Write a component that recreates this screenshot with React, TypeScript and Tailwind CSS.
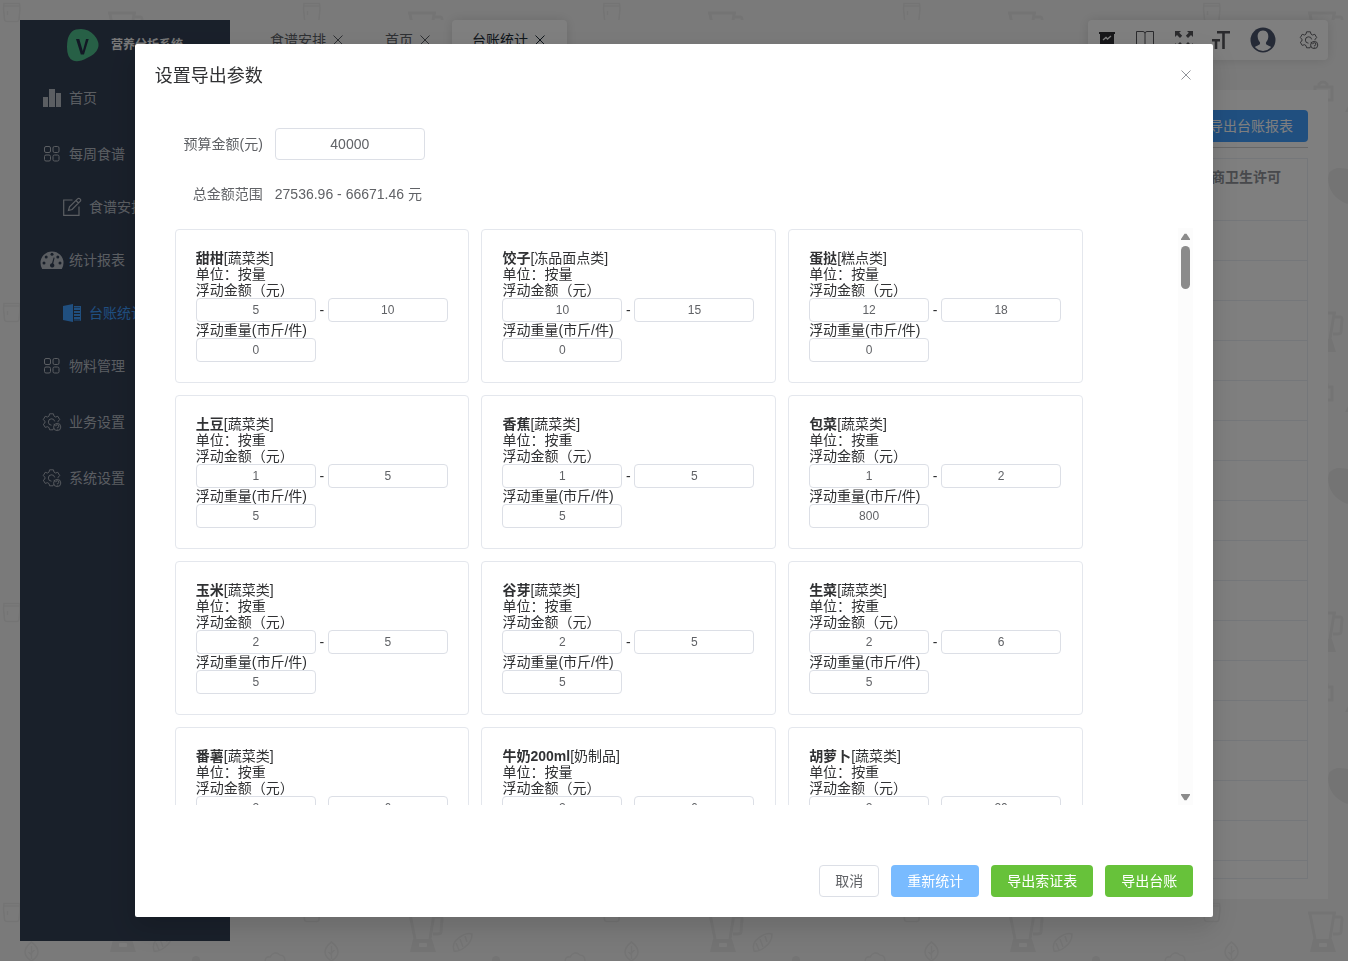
import React from "react";

type Food = {
  name: string;
  category: string;
  unit: string;
  min: string;
  max: string;
  weight: string;
};

const foods: Food[] = [
  { name: "甜柑", category: "蔬菜类", unit: "按量", min: "5", max: "10", weight: "0" },
  { name: "饺子", category: "冻品面点类", unit: "按量", min: "10", max: "15", weight: "0" },
  { name: "蛋挞", category: "糕点类", unit: "按量", min: "12", max: "18", weight: "0" },
  { name: "土豆", category: "蔬菜类", unit: "按重", min: "1", max: "5", weight: "5" },
  { name: "香蕉", category: "蔬菜类", unit: "按重", min: "1", max: "5", weight: "5" },
  { name: "包菜", category: "蔬菜类", unit: "按重", min: "1", max: "2", weight: "800" },
  { name: "玉米", category: "蔬菜类", unit: "按重", min: "2", max: "5", weight: "5" },
  { name: "谷芽", category: "蔬菜类", unit: "按重", min: "2", max: "5", weight: "5" },
  { name: "生菜", category: "蔬菜类", unit: "按重", min: "2", max: "6", weight: "5" },
  { name: "番薯", category: "蔬菜类", unit: "按重", min: "2", max: "6", weight: "5" },
  { name: "牛奶200ml", category: "奶制品", unit: "按量", min: "2", max: "6", weight: "0" },
  { name: "胡萝卜", category: "蔬菜类", unit: "按重", min: "2", max: "20", weight: "5" },
];

const BarsIcon = () => (
  <svg width="20" height="20" viewBox="0 0 20 20" fill="currentColor">
    <path d="M1 9h5v10H1zM7 1h6v18H7zM14 5h5v14h-5z" />
  </svg>
);

const GridIcon = () => (
  <svg width="20" height="20" viewBox="0 0 20 20" fill="none" stroke="currentColor">
    <rect x="2.500" y="2.500" width="6" height="6" rx="1.500" />
    <rect x="11" y="2.500" width="6" height="6" rx="1.500" />
    <rect x="2.500" y="11" width="6" height="6" rx="1.500" />
    <rect x="11" y="11" width="6" height="6" rx="1.500" />
  </svg>
);

const EditIcon = () => (
  <svg width="20" height="20" viewBox="0 0 20 20" fill="none" stroke="currentColor" strokeWidth="1.200">
    <path d="M10.500 3H1.700v15.300h15.300V9.500" />
    <path d="M6.500 13.500l1-3.600 8.300-8.200a1.300 1.300 0 0 1 1.900 0l.6.600a1.300 1.300 0 0 1 0 1.900l-8.200 8.300zM14 3.500l2.500 2.500" />
  </svg>
);

const GaugeIcon = () => (
  <svg className="-mx-0.5" width="24" height="20" viewBox="0 0 24 20">
    <path d="M2.200 19A11.300 11.300 0 0 1 .5 13a11.500 11.500 0 0 1 23 0 11.300 11.300 0 0 1-1.700 6z" fill="currentColor" />
    <g fill="#334055">
      <circle cx="4" cy="13" r="1.500" />
      <circle cx="6.200" cy="7" r="1.500" />
      <circle cx="12" cy="4.300" r="1.500" />
      <circle cx="17.800" cy="7" r="1.500" />
      <circle cx="20" cy="13" r="1.500" />
      <path d="M13.600 7.500l1 .3-1.300 5.700a2.200 2.200 0 1 1-1.300-.3z" />
    </g>
  </svg>
);

const LedgerIcon = () => (
  <svg width="20" height="20" viewBox="0 0 20 20" fill="currentColor">
    <path d="M1 3l10-2v18L1 17z" />
    <path d="M12 3h7v1.500h-7zM12 5h7v2h-7zM12 8h7v2h-7zM12 11h7v2h-7zM12 14h7v2h-7zM12 16.500h7v1h-7z" />
    <path d="M18 3h1v14.500h-1z" />
  </svg>
);

const GearIcon = () => (
  <svg width="20" height="20" viewBox="0 0 20 20" fill="none" stroke="currentColor" strokeWidth="0.900">
    <path d="M11.500 16.300l-.5 1.500H7.600l-.6-2.200-1.500-.9-2.300.7-1.900-3.200L2.900 11V9.200L1.300 7.600l1.900-3.300 2.300.7L7 4.100l.6-2.300h3.800l.6 2.300 1.500.9 2.300-.7 1.900 3.300-1.600 1.600v1" strokeLinejoin="round" />
    <path d="M9.500 13.200a3.200 3.200 0 1 1 3.200-3.800" />
    <circle cx="15.200" cy="15" r="3.600" />
    <path d="M13.800 14.200a1.500 1.500 0 1 1 1.500 1.500v.6M15.300 17v.7M11.700 12.300l1.600 1.200" />
  </svg>
);

const CloseIcon = () => (
  <svg width="10" height="10" viewBox="0 0 10 10" fill="none" stroke="currentColor">
    <path d="M.5.5l9 9M9.500.5l-9 9" />
  </svg>
);

const menu = [
  { label: "首页", icon: <BarsIcon /> },
  { label: "每周食谱", icon: <GridIcon /> },
  { label: "食谱安排", icon: <EditIcon />, child: true },
  { label: "统计报表", icon: <GaugeIcon /> },
  { label: "台账统计", icon: <LedgerIcon />, child: true, active: true },
  { label: "物料管理", icon: <GridIcon /> },
  { label: "业务设置", icon: <GearIcon /> },
  { label: "系统设置", icon: <GearIcon /> },
];

const tabs = [
  { label: "食谱安排" },
  { label: "首页" },
  { label: "台账统计", active: true },
];

// Repeating kitchen doodles behind the whole app
const Wallpaper = () => (
  <svg className="absolute inset-0 w-full h-full" aria-hidden="true">
    <defs>
      <pattern id="kitchen" width="300" height="300" patternUnits="userSpaceOnUse">
        <g fill="none" stroke="#e9e9e9" strokeWidth="1.600">
          <path d="M4 3.500h15.500l.5 5-1 11q-.3 2-2.500 2H7q-2.200 0-2.500-2l-1-11zM4 6h16M7.500 11v4" />
          <path d="M108 13h28M110 14l5 25M134 14l-4 25M134 17h6q2.500 0 2 3l-1 12q-.3 2-3 2h-5" strokeWidth="3" />
          <path d="M31.500 42q-6.500 5-6.500 10t6.500 9q6.500-4 6.500-9t-6.500-10zM31.500 46v13M31.500 55l-3-3M31.500 53l3-3" />
          <path d="M154 51q-3-8 6-14 7-5 12-3 0 8-7 13-6 5-11 4zM156 43l3 7M160 39l3 8M165 36l2 6" />
          <path d="M265 62q0-6 5-5 4-7 10-2 5 0 5 6" />
          <path d="M115 87h17v13h-17zM119 87v-3q4-4 8 0v3" strokeWidth="3" />
        </g>
        <g fill="#e9e9e9">
          <path d="M113 39h19l4 13h-26z" />
          <path d="M128 178q0-8 9-10 14-1 24 8-2 20-14 28-19-8-19-26z" />
          <circle cx="196" cy="60" r="4" />
          <path d="M145 112l7-14 4 14z" />
        </g>
        <rect x="119" y="43" width="8" height="4" rx="1" fill="#f9f9f9" />
      </pattern>
    </defs>
    <rect width="100%" height="100%" fill="url(#kitchen)" />
  </svg>
);

const Sidebar = () => (
  <aside className="w-[210px] shrink-0 bg-[#334055] text-[#b6bcc4]">
    <div className="h-[50px] flex items-center pl-[46px] gap-3">
      <svg width="33" height="34" viewBox="0 0 33 34">
        <path d="M10 1.500Q21-1 28 7q6 7 4 13-2 6-11 10-9 5-14 2.500Q1 30 1 19 1 4 10 1.500z" fill="#4fc08d" />
        <path d="M10 11h3.300l3.500 12 3.200-12h2.700l-4.700 15.500h-3.200z" fill="#26314a" />
      </svg>
      <h1 className="text-xs font-bold text-[#f0f0f0]">营养分析系统</h1>
    </div>
    <nav>
      {menu.map((item) => (
        <a
          key={item.label}
          href="#"
          className={`flex items-center gap-[7px] text-sm ${item.child ? "h-[50px] pl-[42px]" : "h-14 pl-[22px]"} ${
            item.active ? "text-[#409eff]" : ""
          }`}
        >
          {item.icon}
          <span>{item.label}</span>
        </a>
      ))}
    </nav>
  </aside>
);

const Toolbar = () => (
  <div className="h-10 w-60 mr-5 flex items-center rounded bg-white shadow-[0_0_12px_rgba(0,0,0,0.12)] text-[#55555a] pl-2.5 pr-[9px] justify-between">
    <button aria-label="数据看板">
      <svg width="18" height="18" viewBox="0 0 18 18">
        <path d="M1 1h16v2h-1v10H2V3H1zM5 17l3-4h2l3 4h-2l-2-2.500L7 17z" fill="#303034" />
        <path d="M5 9l3-2.500 1.500 1.500L13 5" fill="none" stroke="#fff" strokeWidth="1.300" />
      </svg>
    </button>
    <button aria-label="文档">
      <svg width="20" height="18" viewBox="0 0 20 18" fill="none" stroke="currentColor">
        <path d="M1.500.500h6.500Q10 .500 10 2.500q0-2 2-2h6.500v15H12q-1.500 0-2 1-.5-1-2-1H1.500zM10 2.500v14" />
      </svg>
    </button>
    <button aria-label="全屏">
      <svg width="18" height="18" viewBox="0 0 18 18" fill="currentColor">
        <path d="M0 0h6L4.200 1.800 7.200 4.800 5 7 2 4 0 6zM18 0v6l-2-2-3 3-2.200-2.200 3-3L12 0zM0 18v-6l2 2 3-3 2.200 2.200-3 3L6 18zM18 18h-6l1.800-1.800-3-3L13 11l3 3 2-2z" />
      </svg>
    </button>
    <button aria-label="字号">
      <svg width="18" height="18" viewBox="0 0 18 18" fill="none" stroke="currentColor" strokeWidth="2.600">
        <path d="M5 1.300h13M11.500 1v17M0 9.200h8M4 9v9" />
      </svg>
    </button>
    <button aria-label="用户">
      <svg width="26" height="26" viewBox="0 0 26 26">
        <circle cx="13" cy="13" r="12.500" fill="#4a546c" />
        <path d="M13 3.500c4 0 5.600 3 5.300 6.500-.2 2.500-1.300 4-2.300 5.500-.4 2 .8 2.500 4.500 4q.8.500 0 1.200A11 11 0 0 1 13 24a11 11 0 0 1-7.500-3.300q-.8-.7 0-1.200c3.700-1.500 4.900-2 4.500-4-1-1.500-2.100-3-2.300-5.500C7.400 6.500 9 3.500 13 3.500z" fill="#fff" />
      </svg>
    </button>
    <button aria-label="设置" className="ml-1">
      <GearIcon />
    </button>
  </div>
);

const LedgerPage = () => (
  <main className="flex-1 min-h-0 mt-2.5 mx-5 mb-[22px] p-5 bg-white flex flex-col">
    <div className="flex justify-end pb-[5px] border-b border-[#cfcfcf]">
      <button className="h-8 px-[15px] rounded bg-[#409eff] text-sm text-white">导出台账报表</button>
    </div>
    <div className="mt-2.5 flex-1 min-h-0 overflow-hidden border border-[#ebeef5]">
      <table className="w-full table-fixed text-sm text-[#909399] border-collapse">
        <thead>
          <tr className="h-[61px] border-b border-[#ebeef5]">
            <th />
            <th className="w-[136px] pl-3 pr-4 py-[7px] text-left align-top leading-[23px] font-bold">
              供应商卫生许可证
            </th>
          </tr>
        </thead>
        <tbody>
          {Array.from({ length: 17 }, (_, i) => (
            <tr key={i} className="h-10 border-b border-[#ebeef5]">
              <td />
              <td />
            </tr>
          ))}
        </tbody>
      </table>
    </div>
  </main>
);

const SmallInput = ({ label, value }: { label: string; value: string }) => (
  <input
    aria-label={label}
    defaultValue={value}
    className="block w-[120px] h-6 rounded border border-[#dcdfe6] text-center text-xs text-[#606266] outline-none"
  />
);

const FoodCard = ({ food }: { food: Food }) => (
  <div className="p-5 rounded border border-[#e4e7ed] text-sm leading-4 text-[#303133]">
    <p>
      <b>{food.name}</b>[{food.category}]
    </p>
    <p>单位：{food.unit}</p>
    <p>浮动金额（元）</p>
    <div className="flex items-center">
      <SmallInput label={`${food.name}最低金额`} value={food.min} />
      <span className="w-3 text-center">-</span>
      <SmallInput label={`${food.name}最高金额`} value={food.max} />
    </div>
    <p>浮动重量(市斤/件)</p>
    <SmallInput label={`${food.name}浮动重量`} value={food.weight} />
  </div>
);

const ExportDialog = () => (
  <div
    role="dialog"
    aria-labelledby="dialog-title"
    className="w-4/5 p-5 rounded-xs bg-white text-sm text-[#606266] shadow-[0_12px_32px_4px_rgba(0,0,0,0.08),0_8px_20px_rgba(0,0,0,0.08)]"
  >
    <div className="flex items-start justify-between h-16">
      <h2 id="dialog-title" className="text-lg leading-6 text-[#303133]">
        设置导出参数
      </h2>
      <button aria-label="关闭" className="p-0.5 mt-1 text-[#909399]">
        <CloseIcon />
      </button>
    </div>

    <div className="flex items-center h-8">
      <label htmlFor="budget" className="w-[120px] pr-3 text-right">
        预算金额(元)
      </label>
      <input
        id="budget"
        defaultValue="40000"
        className="w-[150px] h-8 rounded border border-[#dcdfe6] text-center outline-none"
      />
    </div>
    <div className="flex items-center h-8 mt-[18px]">
      <span className="w-[120px] pr-3 text-right">总金额范围</span>
      <span>27536.96 - 66671.46 元</span>
    </div>

    <div className="flex justify-between h-[577px] mt-[18px]">
      <div className="flex-1 pl-5 pt-px overflow-hidden">
        <div className="grid grid-cols-3 gap-3 max-w-[908px]">
          {foods.map((food) => (
            <FoodCard key={food.name} food={food} />
          ))}
        </div>
      </div>
      {/* Scrollbar */}
      <div className="w-[15px] flex flex-col items-center bg-[#fcfcfc] text-[#8b8b8b]">
        <svg className="mt-[5px]" width="9" height="7" viewBox="0 0 9 7" fill="currentColor">
          <path d="M0 7V6l3.500-5.300h2L9 6v1z" />
        </svg>
        <div className="w-[9px] h-[43px] mt-1.5 rounded-full bg-[#8b8b8b]" />
        <svg className="mt-auto mb-1" width="9" height="7" viewBox="0 0 9 7" fill="currentColor">
          <path d="M0 0v1l3.500 5.300h2L9 1V0z" />
        </svg>
      </div>
    </div>

    <div className="flex justify-end gap-3 mt-[60px]">
      <button className="h-8 px-[15px] rounded border border-[#dcdfe6]">取消</button>
      <button className="h-8 px-4 rounded bg-[#79bbff] text-white">重新统计</button>
      <button className="h-8 px-4 rounded bg-[#67c23a] text-white">导出索证表</button>
      <button className="h-8 px-4 rounded bg-[#67c23a] text-white">导出台账</button>
    </div>
  </div>
);

const App: React.FC = () => {
  return (
    <div className="relative h-screen overflow-hidden bg-[#f5f5f5] font-['Liberation_Sans','Noto_Sans_CJK_SC',sans-serif]">
      <Wallpaper />
      <div className="relative h-full flex py-5 pl-5">
        <Sidebar />
        <div className="flex-1 min-w-0 flex flex-col pb-5">
          <header className="h-[60px] shrink-0 flex items-start justify-between bg-[#f5f5f5]">
            <div className="flex pl-5">
              {tabs.map((tab) => (
                <div
                  key={tab.label}
                  className={`h-10 pl-5 pr-[22px] flex items-center gap-[7px] text-sm ${
                    tab.active
                      ? "rounded-t bg-white text-[#1d2b36] shadow-[0_0_12px_rgba(0,0,0,0.12)]"
                      : "text-[#5c6066]"
                  }`}
                >
                  {tab.label}
                  <button aria-label={`关闭${tab.label}`}>
                    <CloseIcon />
                  </button>
                </div>
              ))}
            </div>
            <Toolbar />
          </header>
          <LedgerPage />
        </div>
      </div>

      <div className="fixed inset-0 flex items-center justify-center bg-black/50">
        <ExportDialog />
      </div>
    </div>
  );
};

export default App;
